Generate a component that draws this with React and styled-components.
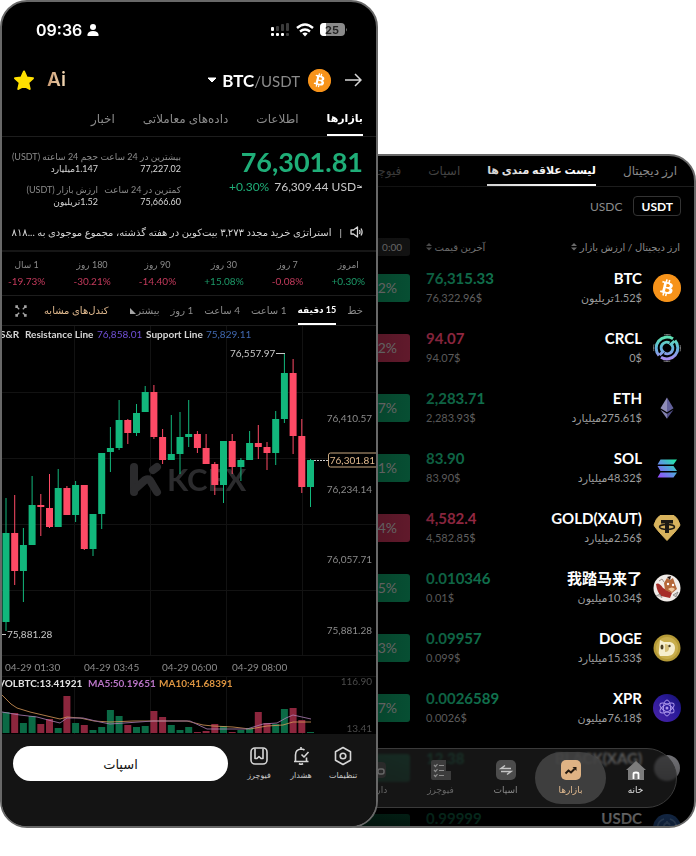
import React from 'react';
import styled, { createGlobalStyle } from 'styled-components';
import { FaBitcoin } from 'react-icons/fa';

const GlobalStyle = createGlobalStyle`
  * {
    box-sizing: border-box;
  }
  body {
    margin: 0;
    background: #fff;
    font-family: Lato, 'DejaVu Sans', 'Noto Sans CJK SC', sans-serif;
    color: #fff;
  }
  button {
    font-family: inherit;
    color: inherit;
    background: none;
    border: none;
    padding: 0;
    cursor: pointer;
  }
`;

const GREEN = '#12b77c';
const RED = '#fd4a65';
const GOLD = '#e0b98e';

const Stage = styled.main`
  display: grid;
  grid-template-columns: minmax(0, 378fr) minmax(0, 318fr);
`;

const Phone = styled.section`
  display: flex;
  flex-direction: column;
  background: #000;
  border: 2px solid #686868;
  border-radius: 27px;
  overflow: hidden;
`;

/* ---------- coin detail ---------- */

const DetailPhone = styled(Phone)`
  grid-area: 1 / 1;
  z-index: 1;
`;

const StatusBar = styled.div`
  display: flex;
  align-items: center;
  height: 56px;
  padding: 0 29px 0 34px;
  gap: 5px;
`;

const Clock = styled.span`
  font-family: Inter, sans-serif;
  font-size: 16px;
  font-weight: 600;
`;

const Spacer = styled.span`
  flex: 1;
`;

const Header = styled.header`
  display: flex;
  align-items: center;
  height: 44px;
  padding: 0 14px 0 11px;
`;

const IconButton = styled.button`
  display: flex;
  align-items: center;
`;

const AiButton = styled.button`
  margin-left: 12px;
  font-family: Inter, sans-serif;
  font-size: 19px;
  font-weight: 600;
  line-height: 22px;
  color: transparent;
  background: linear-gradient(90deg, #c99a72, #f6dcb8);
  background-clip: text;
`;

const Pair = styled.button`
  display: flex;
  align-items: center;
  gap: 5px;
  font-size: 17px;
  font-weight: 700;
`;

const Quote = styled.span`
  font-size: 15px;
  font-weight: 400;
  color: #8b8b8b;
`;

const CoinDisc = styled.span`
  display: flex;
  flex: none;
  margin: 0 14px 0 8px;
`;

const Tabs = styled.nav`
  display: flex;
  direction: rtl;
  height: ${(p) => p.$height}px;
  padding: 0 ${(p) => p.$pad}px;
  gap: ${(p) => p.$gap}px;
  border-bottom: 1px solid #1d1d1d;
  white-space: nowrap;
`;

// the bold Persian face runs wide, so an active tab is one step smaller
const Tab = styled.button`
  flex: none;
  font-size: ${(p) => (p.$size || 12) - (p.$active ? 1 : 0)}px;
  font-weight: ${(p) => (p.$active ? 700 : 400)};
  color: ${(p) => (p.$active ? '#fff' : p.$color || '#8b8b8b')};
  border-bottom: 2px solid ${(p) => (p.$active ? '#fff' : 'transparent')};
`;

const Summary = styled.div`
  display: grid;
  direction: rtl;
  grid-template-columns: 1fr 76px 86px;
  gap: 7px;
  padding: 14px 13px 10px 10px;
  white-space: nowrap;
`;

const PriceBlock = styled.div`
  direction: ltr;
  text-align: right;
  margin-top: -6px;
`;

const Price = styled.div`
  font-size: 27px;
  font-weight: 700;
  line-height: 34px;
  color: #1fae78;
`;

const PriceMeta = styled.div`
  font-size: 12px;
  line-height: 16px;
  color: #c8c8c8;
`;

const Up = styled.span`
  margin-right: 5px;
  color: #1fae78;
`;

const StatColumn = styled.dl`
  display: flex;
  flex-direction: column;
  gap: 9px;
  margin: 0;
  font-size: 9px;
  line-height: 12px;
`;

const StatLabel = styled.dt`
  color: #8b8b8b;
`;

const StatValue = styled.dd`
  margin: 0;
  color: #d6d6d6;
`;

const News = styled.a`
  display: flex;
  align-items: center;
  direction: rtl;
  gap: 8px;
  height: 34px;
  padding: 0 13px 5px 8px;
  border-bottom: 2px solid #161616;
  font-size: 10px;
  white-space: nowrap;
  color: #d6d6d6;
  text-decoration: none;
`;

const Periods = styled.div`
  display: flex;
  direction: rtl;
  justify-content: space-between;
  height: 44px;
  padding: 5px 11px 0 6px;
  border-bottom: 1px solid #1d1d1d;
  font-size: 9px;
  text-align: center;
`;

const Period = styled.div`
  line-height: 16px;
  color: #8b8b8b;
`;

const Change = styled.div`
  direction: ltr;
  font-size: 10px;
  color: ${(p) => (p.$up ? '#1c9a69' : '#c43a5c')};
`;

const Similar = styled(Tab)`
  margin-right: auto;
  margin-left: 6px;
  color: ${GOLD};
`;

const BottomBar = styled.div`
  display: flex;
  gap: 10px;
  padding: 12px 12px 45px 11px;
  background: #141414;
`;

const SpotButton = styled.button`
  flex: 1;
  height: 35px;
  border-radius: 18px;
  background: #fff;
  color: #111;
  font-size: 13px;
`;

const Tools = styled.div`
  display: flex;
`;

const Tool = styled.button`
  display: flex;
  flex-direction: column;
  align-items: center;
  width: 42px;
  gap: 3px;
  font-size: 8px;
  line-height: 12px;
  color: #c8c8c8;
`;

/* ---------- market list ---------- */

const MarketPhone = styled(Phone)`
  grid-area: 1 / 1 / 2 / 3;
  position: relative;
  direction: rtl;
  margin: 154px 0 0 330px;
`;

const Filters = styled.div`
  display: flex;
  gap: 3px;
  padding: 9px 13px 20px;
`;

const Filter = styled.button`
  height: 20px;
  padding: 0 7px;
  border: 1px solid ${(p) => (p.$active ? '#333' : 'transparent')};
  border-radius: 4px;
  font-size: 12px;
  font-weight: ${(p) => (p.$active ? 700 : 400)};
  color: ${(p) => (p.$active ? '#fff' : '#8b8b8b')};
`;

const Scroller = styled.div`
  flex: 1 1 0px;
  min-height: 0;
  overflow: hidden;
`;

const Table = styled.table`
  width: 100%;
  border-collapse: collapse;
  table-layout: fixed;
  white-space: nowrap;
`;

const HeadCell = styled.th`
  width: ${(p) => p.$width || 'auto'};
  height: 22px;
  padding: 0 ${(p) => (p.$first ? 14 : 0)}px 0 0;
  font-size: 10px;
  font-weight: 400;
  text-align: ${(p) => p.$align || 'right'};
  color: #8b8b8b;
`;

const Cell = styled.td`
  height: 60px;
  padding: 0 ${(p) => (p.$first ? 13 : 0)}px 0 0;
`;

const Asset = styled.div`
  display: flex;
  align-items: center;
  gap: 11px;
`;

const Name = styled.div`
  direction: ltr;
  text-align: right;
  font-size: 15px;
  font-weight: 700;
  line-height: 20px;
`;

const Cap = styled.div`
  font-size: 11px;
  line-height: 20px;
  color: #9c9c9c;
`;

const Last = styled.div`
  direction: ltr;
  text-align: left;
  font-size: 15px;
  font-weight: 700;
  line-height: 20px;
  color: ${(p) => (p.$up ? '#14885e' : '#bb3355')};
`;

const LastUsd = styled.div`
  direction: ltr;
  text-align: left;
  font-size: 11px;
  line-height: 20px;
  color: #7c7c7c;
`;

const Badge = styled.div`
  direction: ltr;
  height: ${(p) => p.$height || 28}px;
  margin-right: 16px;
  padding-right: ${(p) => (p.$height ? 8 : 13)}px;
  border-radius: 3px;
  background: ${(p) => p.$color};
  font-size: ${(p) => (p.$height ? 10 : 14)}px;
  line-height: ${(p) => p.$height || 28}px;
  text-align: right;
  color: #a5a5a5;
`;

// darkens the list towards the front phone and towards its bottom
const Shade = styled.div`
  position: absolute;
  inset: 0;
  pointer-events: none;
  background: linear-gradient(0deg, rgba(0, 0, 0, 0.7), transparent 100px),
    linear-gradient(270deg, transparent 35%, rgba(0, 0, 0, 0.45) 90%);
`;

const Dock = styled.nav`
  position: absolute;
  left: -30px;
  right: 17px;
  bottom: 18px;
  display: flex;
  align-items: center;
  height: 60px;
  padding-right: 8px;
  border: 1px solid #3a3a3a;
  border-radius: 30px;
  background: rgba(32, 32, 32, 0.65);
  backdrop-filter: blur(1px);
`;

const DockItem = styled.button`
  display: flex;
  flex: none;
  flex-direction: column;
  align-items: center;
  justify-content: center;
  gap: 3px;
  width: ${(p) => (p.$active ? 71 : 65)}px;
  height: 52px;
  margin: 0 ${(p) => (p.$active ? -3 : 0)}px;
  border-radius: 26px;
  background: ${(p) => (p.$active ? 'rgba(66, 66, 66, 0.9)' : 'none')};
  font-size: 9px;
  line-height: 14px;
  color: ${(p) => p.$color || '#8b8b8b'};
`;

/* ---------- chart ---------- */

// high, top of body, bottom of body, low, rising, volume
const candles = [
  [172, 207, 296, 305, 1, 21],
  [169, 207, 245, 259, 0, 20],
  [202, 219, 245, 276, 1, 10],
  [150, 179, 219, 219, 1, 17],
  [168, 179, 181, 210, 0, 9],
  [148, 182, 201, 202, 0, 14],
  [143, 162, 201, 201, 1, 5],
  [160, 162, 189, 189, 0, 37],
  [155, 159, 189, 196, 1, 10],
  [159, 159, 223, 224, 0, 8],
  [188, 188, 223, 230, 1, 3],
  [127, 127, 188, 203, 1, 6],
  [101, 122, 126, 146, 1, 23],
  [74, 94, 122, 124, 1, 17],
  [93, 94, 107, 118, 0, 8],
  [78, 87, 107, 110, 1, 6],
  [60, 66, 86, 86, 1, 7],
  [59, 66, 111, 113, 0, 22],
  [103, 111, 134, 138, 0, 16],
  [89, 128, 134, 134, 1, 8],
  [86, 111, 128, 148, 1, 3],
  [74, 108, 111, 121, 1, 6],
  [105, 108, 122, 127, 0, 1],
  [108, 122, 138, 138, 0, 2],
  [136, 138, 159, 169, 0, 9],
  [115, 115, 159, 177, 1, 7],
  [108, 115, 141, 148, 0, 1],
  [132, 134, 141, 155, 1, 3],
  [105, 117, 134, 134, 1, 5],
  [99, 117, 121, 133, 0, 21],
  [116, 121, 127, 144, 0, 10],
  [85, 93, 127, 139, 1, 9],
  [27, 47, 93, 97, 1, 24],
  [33, 47, 110, 128, 0, 25],
  [93, 110, 161, 167, 0, 13],
  [133, 134, 161, 181, 1, 1],
];

const candleX = (i) => 4 + i * 8.7;
const gridX = [72, 148, 224, 300];
const gridY = [66, 132, 198, 264, 329];

const ChartSvg = styled.svg`
  display: block;
  width: 100%;
  font-size: 10px;
`;

function PriceChart() {
  return (
    <ChartSvg viewBox="0 0 374 350" role="img" aria-label="BTC/USDT">
      {gridX.map((x) => (
        <path key={x} d={`M${x}.5 0V329`} stroke="#121212" />
      ))}
      {gridY.map((y) => (
        <path key={y} d={`M0 ${y}.5H374`} stroke="#121212" />
      ))}
      <g stroke="#2b2b2d" strokeWidth="8" strokeLinecap="round" strokeLinejoin="round" fill="none">
        <path d="M132 141V166" />
        <path d="M133 163L143 154Q147 152 149 156L155 166" />
        <path d="M151 144L155 141" />
      </g>
      <text x="165" y="165" fontSize="31" fontWeight="700" fill="#2b2b2d">KCEX</text>
      {candles.map(([high, top, bottom, low, rising], i) => (
        <g key={i} fill={rising ? GREEN : RED}>
          <rect x={candleX(i) - 0.5} y={high} width="1" height={low - high} />
          <rect x={candleX(i) - 3.5} y={top} width="7" height={bottom - top} />
        </g>
      ))}
      <g fontWeight="700" fill="#d6d6d6">
        <text x="-2" y="12">S&amp;R</text>
        <text x="23" y="12">Resistance Line</text>
        <text x="95" y="12" fontWeight="400" fill="#7050d8">76,858.01</text>
        <text x="144" y="12">Support Line</text>
        <text x="204" y="12" fontWeight="400" fill="#4068b0">75,829.11</text>
      </g>
      <g fill="#c8c8c8">
        <text x="228" y="31">76,557.97</text>
        <path d="M274 27.500H283" stroke="#c8c8c8" />
        <path d="M0 308.500H4" stroke="#c8c8c8" />
        <text x="5" y="312">75,881.28</text>
      </g>
      <g fill="#8b8b8b" textAnchor="end">
        <text x="370" y="96">76,410.57</text>
        <text x="370" y="167">76,234.14</text>
        <text x="370" y="237">76,057.71</text>
        <text x="370" y="308">75,881.28</text>
      </g>
      <path d="M312 134.500H326" stroke="#c8c8c8" strokeDasharray="2 1" />
      <rect x="326.500" y="127" width="50" height="14" rx="2" fill="#000" stroke="#c9a880" />
      <text x="373" y="138" textAnchor="end" fill={GOLD}>76,301.81</text>
      <g fill="#8b8b8b">
        <text x="3" y="345">04-29 01:30</text>
        <text x="82" y="345">04-29 03:45</text>
        <text x="160" y="345">04-29 06:00</text>
        <text x="230" y="345">04-29 08:00</text>
      </g>
    </ChartSvg>
  );
}

function VolumeChart() {
  return (
    <ChartSvg viewBox="0 0 374 58" role="img" aria-label="VOL">
      <path d="M0 .5H374" stroke="#121212" />
      {gridX.map((x) => (
        <path key={x} d={`M${x}.5 0V58`} stroke="#121212" />
      ))}
      {candles.map(([, , , , rising, volume], i) => (
        <rect
          key={i}
          x={candleX(i) - 3.5}
          y={57 - volume}
          width="7"
          height={volume}
          fill={rising ? '#0b6a45' : '#8c263d'}
        />
      ))}
      <g fill="none" strokeWidth="1" opacity="0.8">
        <path
          stroke="#d99a5b"
          d="M0 19L9 28L15 32L28 36L58 43L65 41L78 42L92 45L108 46L131 45L185 45L201 49L211 50L231 51L248 53L265 50L281 49L291 46L309 46"
        />
        <path
          stroke="#b080b8"
          d="M0 36L18 39L35 41L50 45L58 47L65 42L81 42L98 46L108 48L151 45L188 45L205 53L245 53L261 48L275 47L284 42L291 39L309 43"
        />
      </g>
      <g fontWeight="700">
        <text x="-4" y="11" fill="#e4e4e4">VOLBTC:13.41921</text>
        <text x="86" y="11" fill="#b873c4">MA5:50.19651</text>
        <text x="157" y="11" fill="#dc9440">MA10:41.68391</text>
      </g>
      <g fill="#4c4c4c" textAnchor="end">
        <text x="370" y="9">116.90</text>
        <text x="370" y="56">13.41</text>
      </g>
    </ChartSvg>
  );
}

/* ---------- icons ---------- */

const StatusIcons = () => (
  <svg width="76" height="16" viewBox="0 0 76 16" fill="#fff">
    <g>
      <rect x="0" y="5" width="3" height="4" rx="1" />
      <rect x="0" y="11" width="3" height="3" rx="1" />
      <rect x="5" y="11" width="3" height="3" rx="1" />
      <rect x="10" y="11" width="3" height="3" rx="1" />
    </g>
    <g fill="#3b3b3b">
      <rect x="5" y="4" width="3" height="5" rx="1" />
      <rect x="10" y="2" width="3" height="7" rx="1" />
      <rect x="15" y="1" width="3" height="8" rx="1" />
      <rect x="15" y="11" width="3" height="3" rx="1" />
    </g>
    <g fill="none" stroke="#fff" strokeWidth="2.400">
      <path d="M26 6Q34 -1 42 6" />
      <path d="M29 9.500Q34 5.500 39 9.500" />
    </g>
    <path d="M31.300 11.500Q34 9.500 36.700 11.500L34 14.500Z" />
    <rect x="49" y="1" width="25" height="13" rx="4" fill="#8a8a8a" />
    <path d="M53 1H55V14H53Q49 14 49 10V5Q49 1 53 1Z" />
    <path d="M75 6Q76.500 7.500 75 9.500Z" fill="#8a8a8a" />
    <text x="61" y="12" fontSize="11" fontWeight="700" fontFamily="Inter" textAnchor="middle" fill="#222">25</text>
  </svg>
);

const Person = () => (
  <svg width="12" height="12" viewBox="0 0 12 12" fill="#fff">
    <circle cx="6" cy="3" r="3" />
    <path d="M0.500 12V10.500Q1 7 6 7T11.500 10.500V12Z" />
  </svg>
);

const Star = () => (
  <svg width="22" height="21" viewBox="0 0 22 21">
    <path
      d="M11 1.500L13.700 7.500L20 8.200L15.300 12.600L16.700 19L11 15.800L5.300 19L6.700 12.600L2 8.200L8.300 7.500Z"
      fill="#ffe000"
      stroke="#ffe000"
      strokeWidth="2"
      strokeLinejoin="round"
    />
  </svg>
);

const Arrow = () => (
  <svg width="17" height="14" viewBox="0 0 17 14" fill="none" stroke="#d6d6d6" strokeWidth="1.500">
    <path d="M0 7H15.500M10 1L16 7L10 13" />
  </svg>
);

const Caret = () => (
  <svg width="10" height="6" viewBox="0 0 10 6">
    <path d="M1 1H9L5 5Z" fill="#fff" stroke="#fff" strokeLinejoin="round" />
  </svg>
);

const Horn = () => (
  <svg width="13" height="12" viewBox="0 0 13 12" fill="none" stroke="#d6d6d6" strokeWidth="1.300" strokeLinejoin="round">
    <path d="M1 4H3.500L7.500 1V11L3.500 8H1Z" />
    <path d="M9.500 4Q10.500 6 9.500 8M11 2.500Q13.200 6 11 9.500" />
  </svg>
);

const Expand = () => (
  <svg width="12" height="12" viewBox="0 0 12 12" fill="none" stroke="#a5a5a5" strokeWidth="1.300">
    <path d="M1 1L4 4M4.500 1.500V4.500H1.500M11 1L8 4M7.500 1.500V4.500H10.500M1 11L4 8M4.500 10.500V7.500H1.500M11 11L8 8M7.500 10.500V7.500H10.500" strokeDasharray="none" opacity="0" />
    <path d="M1 3V1H3M1 1L4.200 4.200M9 1H11V3M11 1L7.800 4.200M1 9V11H3M1 11L4.200 7.800M11 9V11H9M11 11L7.800 7.800" />
  </svg>
);

const Corner = () => (
  <svg width="6" height="6" viewBox="0 0 6 6">
    <path d="M0 0V6H6Z" fill="#a5a5a5" />
  </svg>
);

const Sort = () => (
  <svg width="6" height="9" viewBox="0 0 6 9" fill="#6a6a6a">
    <path d="M0 4L3 1L6 4ZM0 5.500L3 8.500L6 5.500Z" />
  </svg>
);

const toolPaths = {
  settings: (
    <>
      <path d="M10 1.500L17.500 5.800V14.200L10 18.500L2.500 14.200V5.800Z" />
      <circle cx="10" cy="10" r="2.800" />
    </>
  ),
  alert: (
    <>
      <path d="M3 15.500H17.500M4.500 15.500V9Q4.500 3.500 10 3Q12 3 13.500 4M15.500 11.500V15.500M10 1V3M8 17.500Q10 19 12 17.500" />
      <path d="M10.500 8.500L13 11L17.500 6" />
    </>
  ),
  futures: (
    <>
      <rect x="2" y="2" width="16" height="16" rx="4" />
      <path d="M6 2.500V12.500H8L10 10.500L12 12.500H14V2.500" />
    </>
  ),
};

const ToolIcon = ({ name }) => (
  <svg width="20" height="20" viewBox="0 0 20 20" fill="none" stroke="#d6d6d6" strokeWidth="1.600" strokeLinejoin="round">
    {toolPaths[name]}
  </svg>
);

const coins = {
  circle: (
    <>
      <defs>
        <linearGradient id="circle" x1="0" y1="0" x2="0" y2="28" gradientUnits="userSpaceOnUse">
          <stop offset="0.150" stopColor="#5fe0b4" />
          <stop offset="0.500" stopColor="#62b4dc" />
          <stop offset="0.900" stopColor="#a98cf0" />
        </linearGradient>
      </defs>
      <g fill="none" strokeWidth="3">
        <circle cx="14" cy="14" r="13.500" stroke="#777" strokeWidth="1" strokeDasharray="7 14.200" strokeDashoffset="3.500" />
        <g stroke="url(#circle)">
          <path d="M20 4.800A11 11 0 0 0 6 21.500" />
          <path d="M8 23.200A11 11 0 0 0 22 6.500" />
          <path d="M16.500 9A5.500 5.500 0 0 0 10 17.800L6.500 21" />
          <path d="M11.500 19A5.500 5.500 0 0 0 18 10.200L21.500 7" />
        </g>
      </g>
    </>
  ),
  eth: (
    <>
      <path d="M14 3.500L7.500 14.300L14 18.200Z" fill="#8f8cb8" />
      <path d="M14 3.500L20.500 14.300L14 18.200Z" fill="#62609a" />
      <path d="M7.500 15.800L14 19.700V24.800Z" fill="#8583b0" />
      <path d="M20.500 15.800L14 19.700V24.800Z" fill="#514f86" />
    </>
  ),
  sol: (
    <>
      <defs>
        <linearGradient id="sol" x1="0" y1="1" x2="1" y2="0">
          <stop offset="0" stopColor="#9a45ff" />
          <stop offset="0.500" stopColor="#5a9be0" />
          <stop offset="1" stopColor="#19f5a0" />
        </linearGradient>
      </defs>
      <path
        fill="url(#sol)"
        d="M7.500 5.500H24L20.500 10.500H4.500ZM4.500 12H20.500L24 17H7.500ZM7.500 18.500H24L20.500 23.500H4.500Z"
      />
    </>
  ),
  gold: (
    <>
      <path d="M7 1.500H21Q25 4 27 11Q26 14 14 26.500Q2 14 1 11Q3 4 7 1.500Z" fill="#d8b35d" stroke="#d8b35d" strokeLinejoin="round" />
      <path d="M8 6H20V9.500H16V19H12V9.500H8Z" fill="#1c1a14" />
      <ellipse cx="14" cy="13" rx="7.500" ry="2.400" fill="none" stroke="#1c1a14" strokeWidth="1.500" />
    </>
  ),
  horse: (
    <>
      <circle cx="14" cy="14" r="13.500" fill="#f1ece8" />
      <path d="M3 10Q6 8 10 14L19 19L17 24L8 22Q4 18 3 10Z" fill="#a62c28" />
      <path d="M11 9L14 4L17 6L20 4L22 10L24 15L19 19L12 16Z" fill="#b5683a" />
      <path d="M14 3L18 2L17 6Z" fill="#2a1710" />
      <circle cx="15" cy="10" r="1.200" fill="#fff" />
      <circle cx="20" cy="11" r="1.200" fill="#fff" />
      <path d="M15 15Q19 12 22 15L19 18Z" fill="#f0c8a0" />
      <path d="M3 22L7 20L9 24M20 21L25 18L23 23Z" fill="#c9c4c0" stroke="#555" strokeWidth="0.500" />
      <path d="M6 7L9 5L11 8" fill="none" stroke="#9a8d88" />
    </>
  ),
  doge: (
    <>
      <circle cx="14" cy="14" r="13.500" fill="#b59a37" />
      <circle cx="14" cy="14" r="11" fill="#c9ae4c" />
      <path d="M7 6L11 8H17Q22 9 22 14Q22 21 15 22H7Q5 19 6 15Z" fill="#f6eecd" />
      <path d="M12 10Q16 10 16 14T12 18Z" fill="#d7c07a" />
      <ellipse cx="9" cy="13" rx="1.500" ry="2.500" fill="#4a3e24" />
      <circle cx="16.500" cy="12" r="1.200" fill="#4a3e24" />
    </>
  ),
  xpr: (
    <>
      <defs>
        <linearGradient id="xpr" x1="0" y1="1" x2="1" y2="0">
          <stop offset="0" stopColor="#4a24a8" />
          <stop offset="0.600" stopColor="#2a1a9a" />
          <stop offset="1" stopColor="#14106a" />
        </linearGradient>
      </defs>
      <circle cx="14" cy="14" r="14" fill="url(#xpr)" />
      <g fill="none" stroke="#aa95ea">
        <ellipse cx="14" cy="14" rx="3.600" ry="8" />
        <ellipse cx="14" cy="14" rx="3.600" ry="8" transform="rotate(60 14 14)" />
        <ellipse cx="14" cy="14" rx="3.600" ry="8" transform="rotate(120 14 14)" />
      </g>
      <circle cx="14" cy="14" r="1.500" fill="#aa95ea" />
    </>
  ),
  black: <circle cx="14" cy="14" r="13" fill="#8d8d92" />,
  usdc: (
    <g fill="none" stroke="#6f9fe0" strokeWidth="1.800">
      <circle cx="14" cy="14" r="14" fill="#2f62ad" stroke="none" />
      <path d="M11 5A9.500 9.500 0 0 0 11 23M17 5A9.500 9.500 0 0 1 17 23M17 11Q16 9 14 9T11 11.500T14 14T17 16.500T14 19T11 17M14 7V9M14 19V21" />
    </g>
  ),
};

const BtcWrap = styled.span`
  display: flex;
  flex: none;
  border-radius: 50%;
  color: #f7931a;
  background: radial-gradient(#fff 55%, #f7931a 57%);
`;

const BtcDisc = ({ size }) => (
  <BtcWrap>
    <FaBitcoin size={size} />
  </BtcWrap>
);

const Coin = ({ name }) =>
  name === 'btc' ? (
    <BtcDisc size={28} />
  ) : (
    <svg width="28" height="28" viewBox="0 0 28 28">{coins[name]}</svg>
  );

const dockIcons = {
  home: (
    <>
      <path d="M10 1L20 10H18V20H2V10H0Z" fill="#7c7c7c" />
      <path d="M7.500 19V14Q7.500 12.500 10 12.500T12.500 14V19" fill="none" stroke="#fff" strokeWidth="1.800" />
    </>
  ),
  markets: (
    <>
      <rect width="20" height="20" rx="5" fill="#dfb384" />
      <path d="M4.500 13.500L7.500 10.500L10 12.500L13.500 9" fill="none" stroke="#241a10" strokeWidth="2" />
      <path d="M11.500 7H15.500V11Z" fill="#241a10" />
    </>
  ),
  spot: (
    <>
      <rect width="20" height="20" rx="5" fill="#4c4c4c" />
      <path d="M15 8.500H5L9 5.500M5 11.500H15L11 14.500" fill="none" stroke="#c4c4c4" strokeWidth="1.500" />
    </>
  ),
  futures: (
    <>
      <path d="M0 2Q0 0 2 0H15V11H20V20H2Q0 20 0 18Z" fill="#3c3c3c" />
      <path d="M3 5L4.500 6.500L6.500 4M3 10L4.500 11.500L6.500 9M3 15L4.500 16.500L6.500 14M8 5.500H13M8 10.500H13M8 15.500H13" fill="none" stroke="#8c8c8c" strokeWidth="1.200" />
    </>
  ),
  assets: (
    <>
      <rect y="2" width="20" height="16" rx="4" fill="#2a2a2a" />
      <rect x="12" y="9" width="6" height="5" rx="2" fill="none" stroke="#666" strokeWidth="1.500" />
    </>
  ),
};

/* ---------- data ---------- */

const periods = [
  ['امروز', '+0.30%'],
  ['7 روز', '-0.08%'],
  ['30 روز', '+15.08%'],
  ['90 روز', '-14.40%'],
  ['180 روز', '-30.21%'],
  ['1 سال', '-19.73%'],
];

const markets = [
  ['btc', 'BTC', '1.52$تریلیون', '76,315.33', '76,322.96$', '2%', 1],
  ['circle', 'CRCL', '0$', '94.07', '94.07$', '2%', 0],
  ['eth', 'ETH', '275.61$میلیارد', '2,283.71', '2,283.93$', '7%', 1],
  ['sol', 'SOL', '48.32$میلیارد', '83.90', '83.90$', '1%', 1],
  ['gold', 'GOLD(XAUT)', '2.56$میلیارد', '4,582.4', '4,582.85$', '4%', 0],
  ['horse', '我踏马来了', '10.34$میلیون', '0.010346', '0.01$', '5%', 1],
  ['doge', 'DOGE', '15.33$میلیارد', '0.09957', '0.099$', '3%', 1],
  ['xpr', 'XPR', '76.18$میلیون', '0.0026589', '0.0026$', '7%', 1],
  ['black', 'BLACK(XAG)', '', '12.38', '', '', 1],
  ['usdc', 'USDC', '', '0.99999', '', '', 1],
];

function CoinDetail() {
  return (
    <DetailPhone>
      <StatusBar>
        <Clock>09:36</Clock>
        <Person />
        <Spacer />
        <StatusIcons />
      </StatusBar>
      <Header>
        <IconButton aria-label="علاقه مندی"><Star /></IconButton>
        <AiButton>Ai</AiButton>
        <Spacer />
        <Pair>
          <Caret />
          <span>BTC<Quote>/USDT</Quote></span>
        </Pair>
        <CoinDisc><BtcDisc size={23} /></CoinDisc>
        <IconButton aria-label="بازگشت"><Arrow /></IconButton>
      </Header>
      <Tabs $height={35} $pad={13} $gap={28}>
        <Tab $active>بازارها</Tab>
        <Tab>اطلاعات</Tab>
        <Tab>داده‌های معاملاتی</Tab>
        <Tab>اخبار</Tab>
      </Tabs>
      <Summary>
        <PriceBlock>
          <Price>76,301.81</Price>
          <PriceMeta><Up>+0.30%</Up>76,309.44 USD≈</PriceMeta>
        </PriceBlock>
        <StatColumn>
          <div>
            <StatLabel>بیشترین در 24 ساعت</StatLabel>
            <StatValue>77,227.02</StatValue>
          </div>
          <div>
            <StatLabel>کمترین در 24 ساعت</StatLabel>
            <StatValue>75,666.60</StatValue>
          </div>
        </StatColumn>
        <StatColumn>
          <div>
            <StatLabel>حجم 24 ساعته (USDT)</StatLabel>
            <StatValue>1.147میلیارد</StatValue>
          </div>
          <div>
            <StatLabel>ارزش بازار (USDT)</StatLabel>
            <StatValue>1.52تریلیون</StatValue>
          </div>
        </StatColumn>
      </Summary>
      <News href="#news">
        <Horn />
        <span>|</span>
        <span>استراتژی خرید مجدد ۳,۲۷۳ بیت‌کوین در هفته گذشته، مجموع موجودی به ...۸۱۸</span>
      </News>
      <Periods>
        {periods.map(([label, value]) => (
          <Period key={label}>
            {label}
            <Change $up={value[0] === '+'}>{value}</Change>
          </Period>
        ))}
      </Periods>
      <Tabs $height={30} $pad={13} $gap={11}>
        <Tab $size={10}>خط</Tab>
        <Tab $size={10} $active>15 دقیقه</Tab>
        <Tab $size={10}>1 ساعت</Tab>
        <Tab $size={10}>4 ساعت</Tab>
        <Tab $size={10}>1 روز</Tab>
        <Tab $size={10}>بیشتر<Corner /></Tab>
        <Similar $size={10}>کندل‌های مشابه</Similar>
        <IconButton aria-label="تمام صفحه"><Expand /></IconButton>
      </Tabs>
      <PriceChart />
      <VolumeChart />
      <BottomBar>
        <SpotButton>اسپات</SpotButton>
        <Tools>
          <Tool><ToolIcon name="futures" />فیوچرز</Tool>
          <Tool><ToolIcon name="alert" />هشدار</Tool>
          <Tool><ToolIcon name="settings" />تنظیمات</Tool>
        </Tools>
      </BottomBar>
    </DetailPhone>
  );
}

function DockLink({ icon, children, ...rest }) {
  return (
    <DockItem {...rest}>
      <svg width="20" height="20" viewBox="0 0 20 20">{dockIcons[icon]}</svg>
      {children}
    </DockItem>
  );
}

function MarketList() {
  return (
    <MarketPhone>
      <Tabs $height={31} $pad={17} $gap={27}>
        <Tab>ارز دیجیتال</Tab>
        <Tab $active>لیست علاقه مندی ها</Tab>
        <Tab $color="#5e5e5e">اسپات</Tab>
        <Tab $color="#5e5e5e">فیوچرز</Tab>
      </Tabs>
      <Filters>
        <Filter $active>USDT</Filter>
        <Filter>USDC</Filter>
      </Filters>
      <Scroller>
        <Table>
          <thead>
            <tr>
              <HeadCell $first>ارز دیجیتال / ارزش بازار <Sort /></HeadCell>
              <HeadCell $width="105px" $align="left">آخرین قیمت <Sort /></HeadCell>
              <HeadCell $width="94px"><Badge $height={18} $color="#1c1c1c">0:00</Badge></HeadCell>
            </tr>
          </thead>
          <tbody>
            {markets.map(([icon, name, cap, last, usd, change, up]) => (
              <tr key={name}>
                <Cell $first>
                  <Asset>
                    <Coin name={icon} />
                    <div>
                      <Name>{name}</Name>
                      <Cap>{cap || '\u00a0'}</Cap>
                    </div>
                  </Asset>
                </Cell>
                <Cell>
                  <Last $up={up}>{last}</Last>
                  <LastUsd>{usd || '\u00a0'}</LastUsd>
                </Cell>
                <Cell>
                  <Badge $color={up ? '#0a7a4f' : '#962743'}>{change || '\u00a0'}</Badge>
                </Cell>
              </tr>
            ))}
          </tbody>
        </Table>
      </Scroller>
      <Shade />
      <Dock>
        <DockLink icon="home" $color="#e0e0e0">خانه</DockLink>
        <DockLink icon="markets" $active $color={GOLD}>بازارها</DockLink>
        <DockLink icon="spot">اسپات</DockLink>
        <DockLink icon="futures" $color="#666">فیوچرز</DockLink>
        <DockLink icon="assets" $color="#666">دارایی</DockLink>
      </Dock>
    </MarketPhone>
  );
}

export default function App() {
  return (
    <>
      <GlobalStyle />
      <Stage>
        <MarketList />
        <CoinDetail />
      </Stage>
    </>
  );
}
